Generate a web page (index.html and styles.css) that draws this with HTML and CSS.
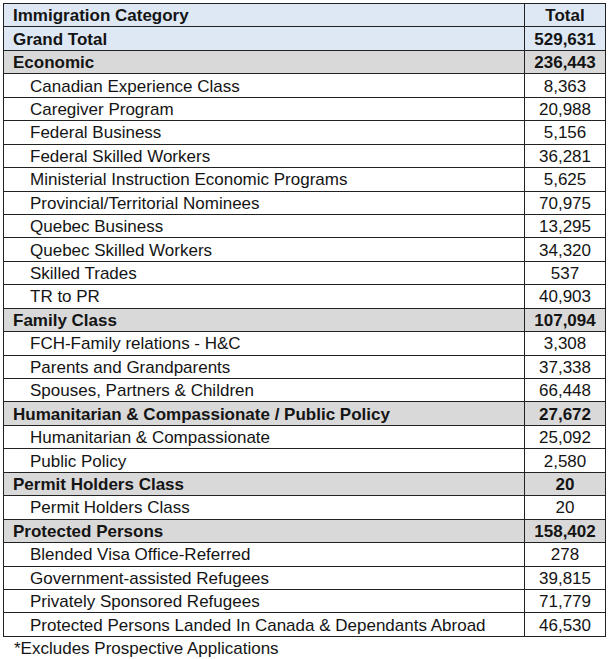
FILE: index.html
```html
<!DOCTYPE html>
<html>
<head>
<meta charset="utf-8">
<link rel="stylesheet" href="styles.css">
</head>
<body>
<table class="tbl">
  <colgroup><col class="c1"><col class="c2"></colgroup>
  <tr class="head"><td>Immigration Category</td><td class="num">Total</td></tr>
  <tr class="grand"><td>Grand Total</td><td class="num">529,631</td></tr>
  <tr class="cat"><td>Economic</td><td class="num">236,443</td></tr>
  <tr class="sub"><td>Canadian Experience Class</td><td class="num">8,363</td></tr>
  <tr class="sub"><td>Caregiver Program</td><td class="num">20,988</td></tr>
  <tr class="sub"><td>Federal Business</td><td class="num">5,156</td></tr>
  <tr class="sub"><td>Federal Skilled Workers</td><td class="num">36,281</td></tr>
  <tr class="sub"><td>Ministerial Instruction Economic Programs</td><td class="num">5,625</td></tr>
  <tr class="sub"><td>Provincial/Territorial Nominees</td><td class="num">70,975</td></tr>
  <tr class="sub"><td>Quebec Business</td><td class="num">13,295</td></tr>
  <tr class="sub"><td>Quebec Skilled Workers</td><td class="num">34,320</td></tr>
  <tr class="sub"><td>Skilled Trades</td><td class="num">537</td></tr>
  <tr class="sub"><td>TR to PR</td><td class="num">40,903</td></tr>
  <tr class="cat"><td>Family Class</td><td class="num">107,094</td></tr>
  <tr class="sub"><td>FCH-Family relations - H&amp;C</td><td class="num">3,308</td></tr>
  <tr class="sub"><td>Parents and Grandparents</td><td class="num">37,338</td></tr>
  <tr class="sub"><td>Spouses, Partners &amp; Children</td><td class="num">66,448</td></tr>
  <tr class="cat"><td>Humanitarian &amp; Compassionate / Public Policy</td><td class="num">27,672</td></tr>
  <tr class="sub"><td>Humanitarian &amp; Compassionate</td><td class="num">25,092</td></tr>
  <tr class="sub"><td>Public Policy</td><td class="num">2,580</td></tr>
  <tr class="cat"><td>Permit Holders Class</td><td class="num">20</td></tr>
  <tr class="sub"><td>Permit Holders Class</td><td class="num">20</td></tr>
  <tr class="cat"><td>Protected Persons</td><td class="num">158,402</td></tr>
  <tr class="sub"><td>Blended Visa Office-Referred</td><td class="num">278</td></tr>
  <tr class="sub"><td>Government-assisted Refugees</td><td class="num">39,815</td></tr>
  <tr class="sub"><td>Privately Sponsored Refugees</td><td class="num">71,779</td></tr>
  <tr class="sub"><td>Protected Persons Landed In Canada &amp; Dependants Abroad</td><td class="num">46,530</td></tr>
</table>
<p class="note">*Excludes Prospective Applications</p>
</body>
</html>
```
FILE: styles.css
```css
html, body {
  margin: 0;
  background: #ffffff;
}
body {
  padding: 3px 0 0 3px;
  font-family: "Liberation Sans", Arial, sans-serif;
  font-size: 17px;
  color: #141414;
}
.tbl {
  border-collapse: collapse;
  width: 602px;
  table-layout: fixed;
}
.c1 { width: 521px; }
.c2 { width: 81px; }
.tbl td {
  border: 1px solid #222;
  height: 21.45px;
  padding: 1px 0 0 9px;
  line-height: 17px;
  white-space: nowrap;
  vertical-align: middle;
}
.tbl td.num {
  text-align: center;
  padding: 1px 0 0 0;
}
.head td, .grand td {
  background: #dde8f4;
  font-weight: bold;
}
.cat td {
  background: #d9d9d9;
  font-weight: bold;
}
.sub td:first-child {
  padding-left: 26px;
}
.note {
  margin: 2px 0 0 11px;
  line-height: 20px;
}
```
